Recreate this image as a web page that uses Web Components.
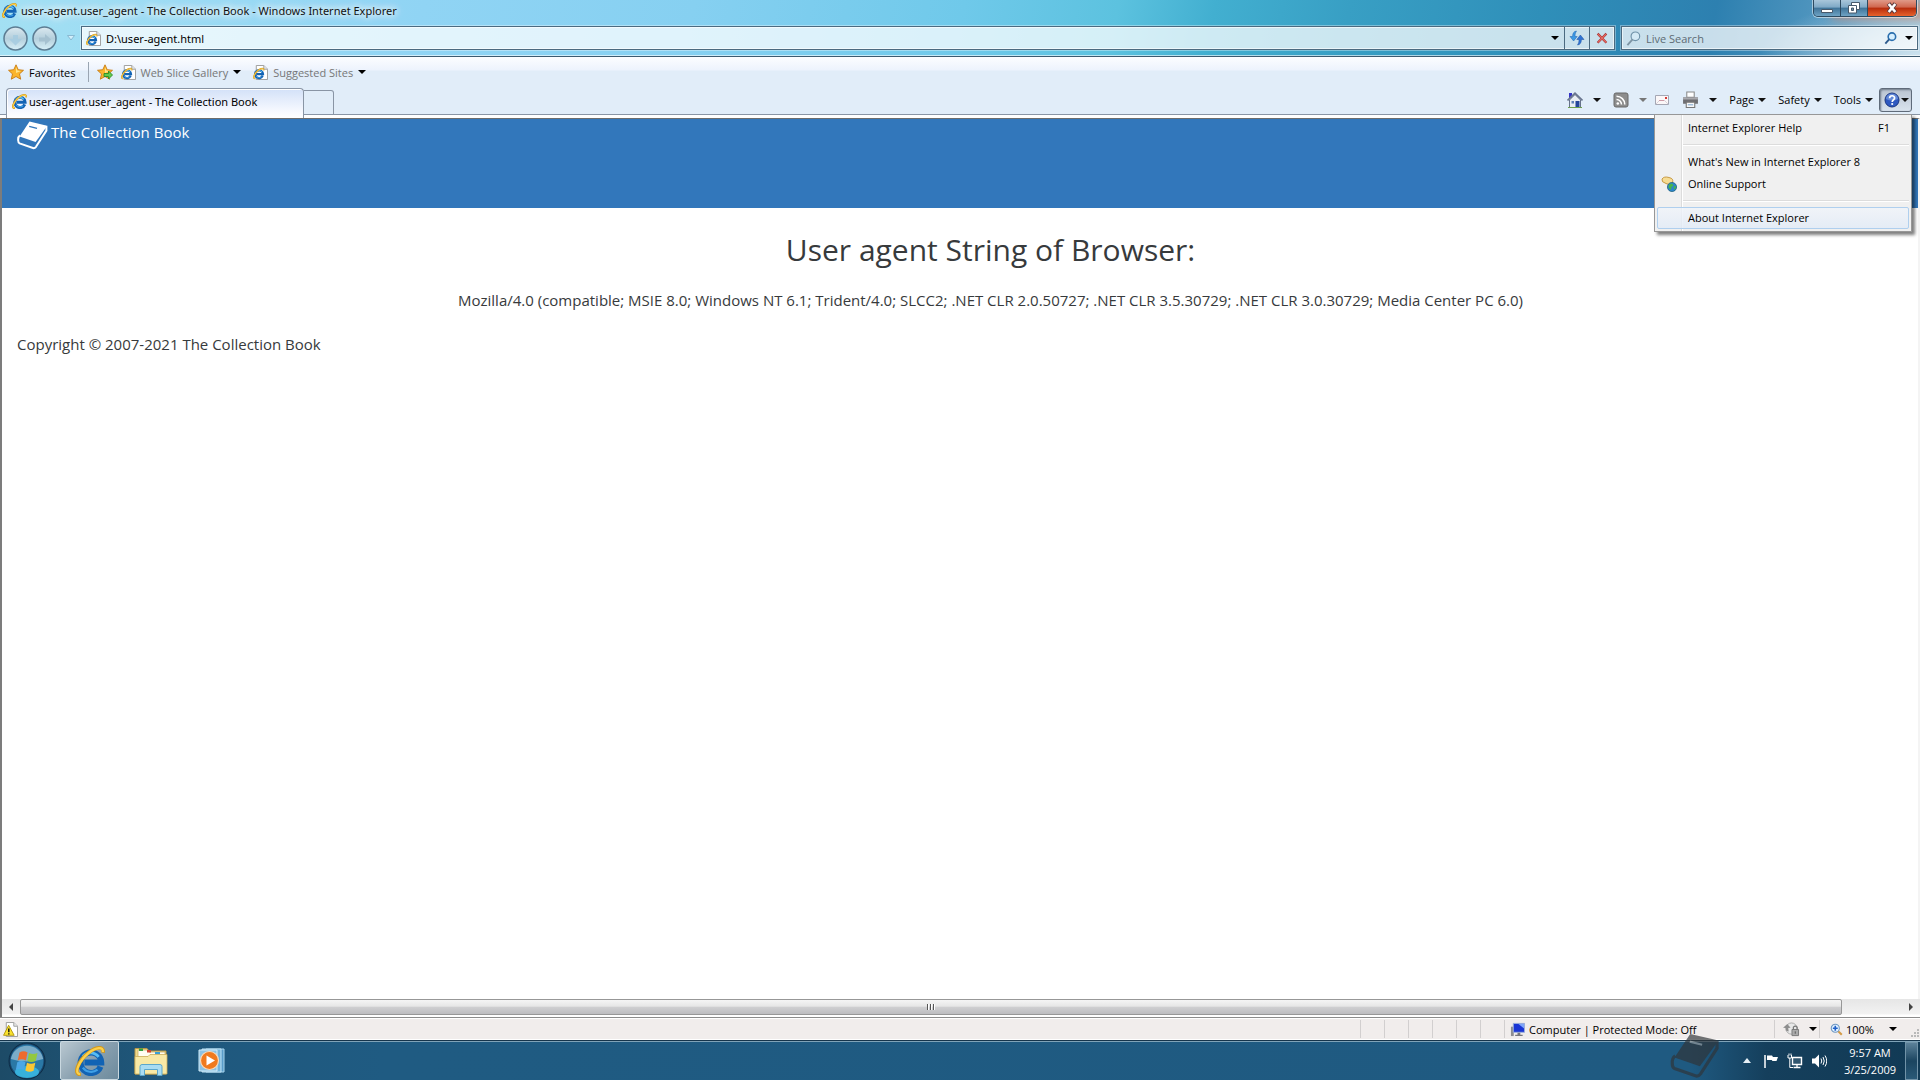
<!DOCTYPE html>
<html lang="en">
<head>
<meta charset="utf-8">
<title>user-agent.user_agent - The Collection Book</title>
<style>
	body {
		margin: 0;
		font-family: "Open Sans", "Noto Sans", sans-serif;
		font-size: 11px;
		color: #000;
		--caption: #111;
		--caption-font: "Noto Sans", "Open Sans", sans-serif;
		--page-blue: #3277bb;
		--line: #8995a5;
	}
</style>
</head>
<body>
<desktop-shell></desktop-shell>

<script>
const ieRing = `
	<path d="M13.6 11A5.500 5.500 0 1 1 14 8.800H5" fill="none" stroke="#1263b4" stroke-width="3.200"/>
	<path d="M12.600 5.800A5.400 5.400 0 0 0 4.200 5.600" fill="none" stroke="#58bdf4" stroke-width="1.500"/>
	<path d="M4.200 11.500A5.400 5.400 0 0 0 12 12.600" fill="none" stroke="#3fa0e6" stroke-width="1.200"/>
	<path d="M3.200 15.200C-1.400 15.400 1.800 7.800 7.200 3.600 11.200.4 15.600-.2 15 3.600" fill="none" stroke="#d39a1c" stroke-width="2"/>
	<path d="M2.800 15C-1 15 2.200 7.800 7.400 3.600 11.200.7 15.200.2 14.900 3.200" fill="none" stroke="#fbd04c" stroke-width="1.200"/>`;
const sheet = `<path d="M3.5.5h8l4 4v11h-12z" fill="#fff" stroke="#9a9a9a"/><path d="M11.5.5v4h4" fill="#e8e8e8" stroke="#9a9a9a"/>`;
const star = `<path d="M8 .8l2.2 4.9 5.3.6-4 3.6 1.2 5.3L8 12.500l-4.700 2.700 1.200-5.300-4-3.600 5.300-.6z" fill="#fbb52c" stroke="#c77a12" stroke-width=".9"/><path d="M8 3l1.400 3.600 3.600.5-5 2z" fill="#ffe48a"/>`;
const bookShape = `
	<path d="M12.500.6L29 4.400Q30 4.800 29.400 6L18.600 21 2.600 15.400z"/>
	<path d="M3 14.400Q.8 16 1.200 19.600 1.200 21.800 2.600 22.400L16.600 27.200Q18 27.200 19 25.800L29.400 9.600V4.800" fill="none" stroke="currentColor" stroke-width="2"/>
	<path d="M12.200 5.400L20 7.400" stroke="var(--slot, #3277bb)" stroke-width="1.400"/>`;

// every drawing is [viewBox, markup]
const icons = {
	ie: ['0 0 16 16', ieRing],
	iepage: ['0 0 16 16', `${sheet}<g transform="translate(0 3) scale(.76)">${ieRing}</g>`],
	star: ['0 0 16 16', star],
	staradd: ['0 0 16 16', `${star}<path d="M7 9.500h4.500V7l4 4-4 4v-2.500H7z" fill="#5fcb4e" stroke="#2b8a24" stroke-width=".9"/>`],
	arrow: ['0 0 8 4', `<path d="M0 0h8L4 4z" fill="currentColor"/>`],
	back: ['0 0 25 25', `<circle cx="12.500" cy="12.500" r="11.500" fill="url(#g)" stroke="#5c7c92" stroke-width="1.500"/><path d="M6 13l6.500 6.500L19 13h-4V9h-5v4z" fill="#a4cbe0" opacity=".8"/>`],
	forward: ['0 0 25 25', `<circle cx="12.500" cy="12.500" r="11.500" fill="url(#g)" stroke="#5c7c92" stroke-width="1.500"/><path d="M7 11.500h6V8l6 5.500-6 5.500v-3.500H7z" fill="#a3bfce" opacity=".9"/>`],
	history: ['0 0 8 6', `<path d="M.5.500h7L4 5z" fill="#d2effb" stroke="#7dafc8" stroke-width=".8"/>`],
	refresh: ['0 0 16 16', `<path d="M7.500 1C4.600 1.400 3.600 3.500 3.600 6.500H1L4.600 11 8.200 6.500H6C6 4 6.500 2.500 7.500 1z" fill="#3d9ae4" stroke="#1a5fae" stroke-width=".5"/><path d="M8.500 15c2.900-.4 3.900-2.500 3.900-5.500H15L11.400 5 7.800 9.500H10c0 2.500-.5 4-1.500 5.500z" fill="#2f74d4" stroke="#1b4f9e" stroke-width=".5"/>`],
	stop: ['0 0 16 16', `<path d="M3 3l10 10.500M13 3L3 13.500" stroke="#a53a3a" stroke-width="2.600"/><path d="M3.500 3.500L13 13.200M12.500 3.500L3.500 13" stroke="#ea6a62" stroke-width="1.300"/>`],
	lens: ['0 0 16 16', `<circle cx="10" cy="5.600" r="4.600" fill="#d9eefa" fill-opacity=".7" stroke="#6f92a8" stroke-width="1.200"/><path d="M7 9L1.500 15" stroke="#7e95a4" stroke-width="2"/>`],
	go: ['0 0 16 16', `<circle cx="9.500" cy="6" r="4" fill="#d6efff" stroke="#2b6fae" stroke-width="1.700"/><path d="M6.500 9L2.500 13.500" stroke="#2c5a8c" stroke-width="2"/>`],
	home: ['0 0 16 16', `<path d="M2 1h3v5H2z" fill="#3434c8"/><path d="M2.500 8L8 2.500 13.500 8v7.500h-11z" fill="#e9edf3" stroke="#66728a"/><path d="M.5 8.500L8 1.300l7.500 7.200" fill="none" stroke="#6a7690" stroke-width="1.700"/><path d="M8.500 9h4v6.500h-4z" fill="#24459a"/><path d="M4.500 9h2.500v2.500H4.500z" fill="#5d7fb8"/><path d="M1 15.500h14" stroke="#6ca04c"/>`],
	rss: ['0 0 16 16', `<rect x="1" y="1" width="14" height="14" rx="2" fill="#8d8d8d" stroke="#686868"/><circle cx="4.800" cy="11.500" r="1.300" fill="#fff"/><path d="M3.500 7.500a5 5 0 0 1 5 5M3.500 4.200a8.300 8.300 0 0 1 8.300 8.300" fill="none" stroke="#fff" stroke-width="1.500"/>`],
	mail: ['0 0 16 16', `<path d="M1.500 3.500h13v9h-13z" fill="#fbf7f8" stroke="#a5a7b4"/><path d="M2 12l4-4M14 12l-4-4" stroke="#d9d2da"/><path d="M11 5h2v2h-2z" fill="#d43a36"/><path d="M5 8.500h5" stroke="#cc9aa6"/>`],
	print: ['0 0 16 16', `<path d="M4.500 1h7v5h-7z" fill="#fff" stroke="#8a8a8a"/><path d="M1 6h14v6H1z" fill="#6e6e72"/><path d="M1 6h14v2H1z" fill="#a9a9ad"/><path d="M4 10.500h8v5H4z" fill="#f7f7f7" stroke="#777"/><path d="M5.500 13h5" stroke="#7fa8d0"/>`],
	help: ['0 0 16 16', `<circle cx="8" cy="8" r="7" fill="#2e58c0" stroke="#1b3680"/><path d="M2 7a6 5.500 0 0 1 12 0q-6 3-12 0z" fill="#86a8e8" opacity=".6"/><path d="M5.600 6.200C5.600 3 10.600 3 10.600 6c0 1.800-2.400 1.800-2.400 4" fill="none" stroke="#fff" stroke-width="1.700"/><circle cx="8.200" cy="12" r="1.100" fill="#fff"/>`],
	support: ['0 0 16 16', `<path d="M1 3Q3 0 8 1.500q5 1 3.500 5L9.500 9 5 7.500Q0 6 1 3z" fill="#f6dc93" stroke="#c29239" stroke-width=".9"/><circle cx="11" cy="11" r="4.600" fill="#2c86c9" stroke="#195a78" stroke-width=".7"/><path d="M8 8.500l3-1 1.500 2-2 1.500-.5 3-2.500-2.500zM13.500 10l1.700.5-1.200 3-1.500-1.500z" fill="#46b54a"/>`],
	min: ['0 0 14 12', `<path d="M1.500 7.500h11v3h-11z" fill="#fff" stroke="#47596b"/>`],
	restore: ['0 0 14 12', `<path d="M4.500.5h8v7h-8z" fill="#fff" stroke="#47596b"/><path d="M1.500 3.500h8v7.500h-8z" fill="#fff" stroke="#47596b"/><path d="M4.500 6h2v2.500h-2z" fill="#7391a8" stroke="#47596b"/>`],
	close: ['0 0 14 12', `<path d="M3.500 1.500l7 9M10.500 1.500l-7 9" stroke="#5b3a3c" stroke-width="4.400"/><path d="M3.700 2l6.600 8M10.300 2l-6.600 8" stroke="#fff" stroke-width="2.600"/>`],
	warn: ['0 0 16 16', `${sheet}<path d="M6 3.500L.6 14.200h11.300z" fill="#fbe22c" stroke="#b39710" stroke-linejoin="round"/><path d="M6.200 7v4M6.200 12v1.400" stroke="#111" stroke-width="1.500"/>`],
	computer: ['0 0 16 16', `<path d="M1 5h3v10H1z" fill="#8d8d92"/><path d="M3.500 1.500h12v9.500h-12z" fill="#1a35d4" stroke="#9db1dc"/><path d="M9 2h6v5z" fill="#7ea4fa"/><path d="M8 11.500h3v2h2.500V15h-8v-1.500H8z" fill="#77777c"/>`],
	lock: ['0 0 18 16', `<circle cx="9" cy="7" r="6" fill="#e8e8e8" stroke="#a9a9a9"/><path d="M0 6l4.500-4L8 6 5.500 6.500 6 10 3 9 2.800 6.500z" fill="#8e8e8e"/><path d="M9.500 8h7v6.500h-7z" fill="#aaa" stroke="#777"/><path d="M11 8V5.500q2-2 4 0V8" fill="none" stroke="#777" stroke-width="1.300"/><path d="M13 10v2.500" stroke="#555"/>`],
	zoom: ['0 0 16 16', `<path d="M10 10l4.500 4.500" stroke="#d39a45" stroke-width="2.600"/><circle cx="6.500" cy="6.500" r="5" fill="#e4f3ff" stroke="#6e96c0" stroke-width="1.300"/><path d="M6.500 3.500v6M3.500 6.500h6" stroke="#1f5fc8" stroke-width="2"/>`],
	grip: ['0 0 10 10', `<path d="M7 1h2v2H7zM7 4h2v2H7zM7 7h2v2H7zM4 4h2v2H4zM4 7h2v2H4zM1 7h2v2H1z" fill="#b9b9b9"/>`],
	left: ['0 0 6 8', `<path d="M5 0v8L1 4z" fill="#444"/>`],
	right: ['0 0 6 8', `<path d="M1 0v8l4-4z" fill="#444"/>`],
	orb: ['0 0 38 38', `
		<circle cx="19" cy="19" r="18" fill="#17456b" stroke="#0d2c45"/>
		<circle cx="19" cy="19" r="16.500" fill="#2a78a6"/>
		<ellipse cx="19" cy="30" rx="12" ry="6" fill="#3cc4ee" opacity=".75"/>
		<path d="M2.800 17a16.500 16.500 0 0 1 32.400 0q-16 5-32.400 0z" fill="#a8c8da" opacity=".65"/>
		<path d="M11.500 10.500q4-2.500 8 0l-1.600 8q-4-2.300-8.200 0z" fill="#ee6a2e"/>
		<path d="M21 11q4 2.200 8.500 0l-1.800 8q-4.200 2.200-8.300 0z" fill="#93c83e"/>
		<path d="M9.300 20.200q4-2.200 8.200 0l-1.700 8q-4-2.500-8-.2z" fill="#4aa7e6"/>
		<path d="M19 20.700q4 2.200 8.300 0l-1.700 8q-4.300 2.300-8.200-.2z" fill="#fbc734"/>`],
	explorer: ['0 0 34 30', `
		<path d="M1 6V2.500h12L15 5h17v23H1z" fill="#efd88a" stroke="#b89748"/>
		<path d="M4 4h10l1 2h16v5H4z" fill="#fffdf2" stroke="#c8b06a" stroke-width=".8"/>
		<path d="M5 2.500h4V5H5z" fill="#35a03c"/><path d="M13 4h4v2.500h-4z" fill="#cf4433"/><path d="M21 6h5v2.500h-5z" fill="#38a0d6"/>
		<path d="M1 10.500h13l2-2h17V28H1z" fill="#f8e9a6" stroke="#cbae5c" stroke-width=".8"/>
		<path d="M6 29.500V20.500q0-2 2-2h18q2 0 2 2v9h-4.500v-6h-13v6z" fill="#a9dcf2" stroke="#5ba7cc"/>`],
	media: ['0 0 28 26', `
		<path d="M8 1h18v23H8z" fill="#5a9cc8" stroke="#a7d5ee"/>
		<path d="M4 1h19v23H4z" fill="#74b4dc" stroke="#bfe2f4"/>
		<path d="M1 2h18v21H1z" fill="#8cc2e4" stroke="#d3ecf8"/>
		<circle cx="11.500" cy="12.500" r="9" fill="#f07a1e" stroke="#fbd9b5" stroke-width="1.200"/>
		<path d="M8.500 7.500v10l8.500-5z" fill="#fff"/>`],
	hidden: ['0 0 8 5', `<path d="M0 5l4-5 4 5z" fill="#e6f0f6"/>`],
	flag: ['0 0 16 16', `<path d="M2 2v13" stroke="#fff" stroke-width="1.500"/><path d="M4 2.500h5l1 1.500h5l-1.500 4H9.500l-.8-1H4z" fill="#fff"/>`],
	network: ['0 0 16 16', `<path d="M5.500 4.500h9v7h-9z" fill="#31566f" stroke="#fff" stroke-width="1.400"/><path d="M10 12v2M6.500 14.500h7" stroke="#fff" stroke-width="1.300"/><path d="M1 2v3h3.500V2M2.800 5v9.500H6M2 .5v2M4 .5v2" fill="none" stroke="#fff"/>`],
	sound: ['0 0 16 16', `<path d="M1 5.500h3L8 1.500v13l-4-4H1z" fill="#fff"/><path d="M10 5.500q1.500 2.500 0 5M12 4q2.500 4 0 8M14 2.500q3.500 5.500 0 11" fill="none" stroke="#fff"/>`],
	book: ['0 0 31 29', bookShape]
};

class WinIcon extends HTMLElement {
	constructor() {
		super();
		this.attachShadow({ mode: 'open' });
	}

	connectedCallback() {
		const [box, art] = icons[this.getAttribute('name')];
		const w = this.getAttribute('w') || 16;
		const h = this.getAttribute('h') || w;
		this.shadowRoot.innerHTML = `
			<style>
				:host { display: inline-flex; flex: none; }
				svg { display: block; }
			</style>
			<svg width="${w}" height="${h}" viewBox="${box}" fill="currentColor" aria-hidden="true">
				<defs><linearGradient id="g" x2="0" y2="1"><stop stop-color="#dbe9f0"/><stop offset=".5" stop-color="#b4cfdc"/><stop offset="1" stop-color="#d8f0f8"/></linearGradient></defs>
				${art}
			</svg>`;
	}
}
customElements.define('win-icon', WinIcon);

// small helper: an element whose shadow root is one fixed template
function define(name, html) {
	const template = document.createElement('template');
	template.innerHTML = html;
	customElements.define(name, class extends HTMLElement {
		constructor() {
			super();
			this.attachShadow({ mode: 'open' });
			this.shadowRoot.appendChild(template.content.cloneNode(true));
		}
	});
}

const reset = `
	:host, * { box-sizing: border-box; }
	button, input { font: inherit; color: inherit; margin: 0; padding: 0; border: 0; background: none; }
	button { display: flex; align-items: center; white-space: nowrap; }
`;

define('title-bar', `
	<style>
		${reset}
		:host { display: flex; align-items: flex-start; height: 25px; padding: 0 3px 0 2px; }
		.name { display: flex; align-items: center; gap: 4px; height: 21px; flex: 1; color: var(--caption); font-family: var(--caption-font); }
		.name span { text-shadow: 0 0 6px #fff, 0 0 8px #fff, 0 0 12px #fff; }
		.buttons { display: flex; border: 1px solid #2d4a60; border-top: 0; border-radius: 0 0 5px 5px; box-shadow: 0 0 0 1px rgba(255,255,255,.5), 18px 2px 10px rgba(240,120,70,.5); overflow: hidden; }
		.buttons button { justify-content: center; width: 27px; height: 16px; background: linear-gradient(#a9c6da, #7fa9c6 45%, #3f7398 50%, #6ea3c4); border-right: 1px solid #2d4a60; }
		.buttons button.close { width: 48px; border: 0; background: linear-gradient(#e09a88, #d0664d 45%, #b62c0c 50%, #e8622c); }
	</style>
	<div class="name"><win-icon name="ie" w="15"></win-icon><span>user-agent.user_agent - The Collection Book - Windows Internet Explorer</span></div>
	<div class="buttons">
		<button aria-label="Minimize"><win-icon name="min" w="14" h="12"></win-icon></button>
		<button aria-label="Restore"><win-icon name="restore" w="14" h="12"></win-icon></button>
		<button class="close" aria-label="Close"><win-icon name="close" w="14" h="12"></win-icon></button>
	</div>
`);

define('nav-bar', `
	<style>
		${reset}
		:host { display: flex; align-items: flex-start; height: 32px; padding: 1px 2px 0 3px; border-bottom: 1px solid #3c5a70; box-shadow: inset 0 -1px rgba(255,255,255,.6); }
		.travel { display: flex; align-items: center; gap: 4px; height: 24px; width: 78px; }
		.travel .recent { margin-left: 6px; }
		.box { display: flex; height: 24px; border: 1px solid #4b6a80; box-shadow: 0 0 0 1px rgba(255,255,255,.35), inset 0 0 0 1px rgba(255,255,255,.6); background: rgba(255,255,255,.74); }
		.address { flex: 1; font-family: var(--caption-font); }
		.address label { display: flex; align-items: center; gap: 5px; flex: 1; padding-left: 4px; }
		.address input { flex: 1; }
		.box button { justify-content: center; width: 25px; }
		.address button + button { border-left: 1px solid #4b6a80; }
		.address button.drop { width: 18px; }
		.search { width: 297px; margin-left: 6px; }
		.search label { display: flex; align-items: center; gap: 5px; flex: 1; padding-left: 4px; }
		.search input { flex: 1; min-width: 0; }
		.search input::placeholder { color: #5d6b74; opacity: 1; }
		.search button.drop { width: 14px; padding-right: 2px; }
	</style>
	<div class="travel">
		<button aria-label="Back"><win-icon name="back" w="25"></win-icon></button>
		<button aria-label="Forward"><win-icon name="forward" w="25"></win-icon></button>
		<button class="recent" aria-label="Recent pages"><win-icon name="history" w="8" h="6"></win-icon></button>
	</div>
	<div class="box address">
		<label><win-icon name="iepage" w="15"></win-icon><input type="text" aria-label="Address" value="D:\\user-agent.html"></label>
		<button class="drop" aria-label="Show address list"><win-icon name="arrow" w="8" h="4"></win-icon></button>
		<button aria-label="Refresh"><win-icon name="refresh" w="16"></win-icon></button>
		<button aria-label="Stop"><win-icon name="stop" w="14"></win-icon></button>
	</div>
	<div class="box search">
		<label><win-icon name="lens" w="15"></win-icon><input type="text" aria-label="Live Search" placeholder="Live Search"></label>
		<button aria-label="Search"><win-icon name="go" w="15"></win-icon></button>
		<button class="drop" aria-label="Search options"><win-icon name="arrow" w="8" h="4"></win-icon></button>
	</div>
`);

define('favorites-bar', `
	<style>
		${reset}
		:host { display: flex; align-items: center; height: 30px; padding-left: 8px; background: linear-gradient(#fcfdff, #edf3fd 13px, #e1edf9 14px); }
		button { gap: 5px; }
		.sep { width: 1px; height: 20px; margin: 0 8px 0 12px; background: #9aa5b2; }
		.link { color: #777; margin-left: 8px; }
		.link + .link { margin-left: 12px; }
		.link win-icon:last-child { color: #000; }
	</style>
	<button><win-icon name="star" w="16"></win-icon>Favorites</button>
	<span class="sep"></span>
	<button aria-label="Add to Favorites Bar"><win-icon name="staradd" w="16"></win-icon></button>
	<button class="link"><win-icon name="iepage" w="15"></win-icon>Web Slice Gallery<win-icon name="arrow" w="8" h="4"></win-icon></button>
	<button class="link"><win-icon name="iepage" w="15"></win-icon>Suggested Sites<win-icon name="arrow" w="8" h="4"></win-icon></button>
`);

// toolbar button with a drop-down arrow; the caption or icon comes in by the slot
define('command-button', `
	<style>
		${reset}
		:host { display: block; }
		button { gap: var(--arrow-gap, 4px); height: 24px; }
		win-icon { color: var(--arrow, #111); }
	</style>
	<button><slot></slot><win-icon name="arrow" w="8" h="4"></win-icon></button>
`);

define('help-menu', `
	<style>
		${reset}
		:host {
			display: block; width: 258px; padding: 2px; border: 1px solid #979797;
			background: linear-gradient(90deg, transparent 26px, #dcdcdc 26px, #dcdcdc 27px, #fff 27px, #fff 28px, transparent 28px), #f0f0f0;
			box-shadow: 3px 3px 3px rgba(0,0,0,.5);
		}
		button { width: 100%; height: 22px; border: 1px solid transparent; border-radius: 2px; padding-right: 18px; }
		.icon { width: 30px; padding-left: 3px; display: flex; }
		.key { margin-left: auto; }
		hr { height: 2px; margin: 5px 0 5px 26px; border: 0; background: linear-gradient(#dcdcdc 50%, #fff 50%); }
		.hot { border-color: #afcfee; background: linear-gradient(rgba(240,244,250,.8), rgba(226,235,247,.8)); }
	</style>
	<button><span class="icon"></span>Internet Explorer Help<span class="key">F1</span></button>
	<hr>
	<button><span class="icon"></span>What's New in Internet Explorer 8</button>
	<button><span class="icon"><win-icon name="support" w="16"></win-icon></span>Online Support</button>
	<hr>
	<button class="hot"><span class="icon"></span>About Internet Explorer</button>
`);

define('tab-row', `
	<style>
		${reset}
		:host { display: flex; height: 31px; padding: 0 8px 0 6px; background: linear-gradient(#e1edf9 27px, var(--line) 27px, var(--line) 28px, #fff 28px); }
		.tab { width: 298px; height: 30px; margin-top: 1px; padding: 0 0 4px 5px; gap: 2px; border: 1px solid var(--line); border-bottom: 0; border-radius: 4px 4px 0 0; background: linear-gradient(#d3e1f8, #f8faff 80%, #fff); box-shadow: inset 1px 1px #fff; font-family: var(--caption-font); }
		.new { width: 30px; height: 25px; margin-top: 3px; border: 1px solid var(--line); border-left: 0; border-radius: 0 3px 0 0; }
		.commands { display: flex; gap: 12px; margin-left: auto; height: 25px; align-items: center; }
		.wide { --arrow-gap: 10px; }
		.off { --arrow: #777; }
		.mail { margin-left: -5px; }
		.help { position: relative; width: 33px; height: 24px; margin-left: -6px; border: 1px solid #5f6b7a; border-radius: 3px; background: linear-gradient(#b9c3d0, #d9e3ee); box-shadow: inset 1px 1px 2px #6f7b8a; --arrow-gap: 1px; }
		.help command-button { padding-left: 4px; margin-top: -1px; }
		help-menu { position: absolute; top: 25px; right: -1px; z-index: 2; }
	</style>
	<button class="tab"><win-icon name="ie" w="15"></win-icon>user-agent.user_agent - The Collection Book</button>
	<button class="new" aria-label="New Tab"></button>
	<div class="commands">
		<command-button class="wide"><win-icon name="home" w="16"></win-icon></command-button>
		<command-button class="wide off"><win-icon name="rss" w="16"></win-icon></command-button>
		<button class="mail" aria-label="Read mail"><win-icon name="mail" w="16"></win-icon></button>
		<command-button class="wide"><win-icon name="print" w="17"></win-icon></command-button>
		<command-button>Page</command-button>
		<command-button>Safety</command-button>
		<command-button>Tools</command-button>
		<div class="help">
			<command-button><win-icon name="help" w="16"></win-icon></command-button>
			<help-menu></help-menu>
		</div>
	</div>
`);

define('web-page', `
	<style>
		:host, * { box-sizing: border-box; }
		:host { display: block; overflow: hidden; border: 2px solid #7c7c7c; border-top: 1px solid #6d6d6d; border-right-color: #f4f4f4; border-bottom: 0; background: #fff; font-size: 15px; color: #373a3c; }
		/* the document is a little wider than the viewport */
		.doc { margin-right: -61px; }
		header { height: 89px; padding: 1px 15px; background: var(--page-blue); }
		header a { display: inline-flex; align-items: flex-start; gap: 3px; color: #fff; text-decoration: none; line-height: 24px; }
		main { text-align: center; }
		h1 { margin: 0; padding-top: 20px; font-size: 30px; line-height: 44px; font-weight: 400; }
		p { margin: 0; line-height: 24px; }
		main p { padding-top: 16px; }
		footer { padding: 20px 15px; }
		win-icon { padding-top: 1px; }
	</style>
	<div class="doc">
		<header><a href="#"><win-icon name="book" w="31" h="29"></win-icon>The Collection Book</a></header>
		<main>
			<h1>User agent String of Browser:</h1>
			<p>Mozilla/4.0 (compatible; MSIE 8.0; Windows NT 6.1; Trident/4.0; SLCC2; .NET CLR 2.0.50727; .NET CLR 3.5.30729; .NET CLR 3.0.30729; Media Center PC 6.0)</p>
		</main>
		<footer><p>Copyright © 2007-2021 The Collection Book</p></footer>
	</div>
`);

define('scroll-bar', `
	<style>
		${reset}
		:host { display: flex; height: 18px; padding-bottom: 2px; border-left: 2px solid #7c7c7c; background: linear-gradient(#e6e6e6, #f2f2f2 15px, #fff 16px); }
		button { justify-content: center; width: 18px; }
		.track { flex: 1; display: flex; }
		.thumb { display: flex; align-items: center; justify-content: center; gap: 1px; width: calc(100% - 60px); border: 1px solid #979797; border-radius: 2px; background: linear-gradient(#f5f5f5, #e6e6e6 45%, #cfcfd1 50%, #bdbdc0); }
		.thumb i { width: 2px; height: 6px; background: #555; border-right: 1px solid #fff; }
	</style>
	<button aria-label="Scroll left"><win-icon name="left" w="6" h="8"></win-icon></button>
	<div class="track"><div class="thumb"><i></i><i></i><i></i></div></div>
	<button aria-label="Scroll right"><win-icon name="right" w="6" h="8"></win-icon></button>
`);

define('status-bar', `
	<style>
		${reset}
		:host { display: flex; height: 23px; border-top: 1px solid #8c8c8c; box-shadow: inset 0 1px #fff, inset 0 -1px #fff; background: #f1edec; }
		.message { flex: 1; display: flex; align-items: center; gap: 4px; padding-left: 3px; }
		.pane { display: flex; align-items: center; width: 24px; margin: 2px 0; border-left: 1px solid #d2cfcf; }
		.zone { width: 270px; gap: 4px; padding-left: 5px; }
		.lock { width: 45px; }
		.lock button { gap: 9px; padding-left: 8px; }
		.zoom { width: 101px; padding-left: 10px; }
		.zoom button { gap: 3px; }
		.zoom button win-icon:last-child { margin-left: 12px; }
		.grip { margin: 8px 0 0 auto; }
	</style>
	<div class="message"><win-icon name="warn" w="15"></win-icon>Error on page.</div>
	<div class="pane"></div><div class="pane"></div><div class="pane"></div>
	<div class="pane"></div><div class="pane"></div><div class="pane"></div>
	<div class="pane zone"><win-icon name="computer" w="15"></win-icon>Computer | Protected Mode: Off</div>
	<div class="pane lock"><button aria-label="InPrivate Filtering"><win-icon name="lock" w="17" h="15"></win-icon><win-icon name="arrow" w="8" h="4"></win-icon></button></div>
	<div class="pane zoom"><button><win-icon name="zoom" w="13"></win-icon>100%<win-icon name="arrow" w="8" h="4"></win-icon></button><win-icon class="grip" name="grip" w="10"></win-icon></div>
`);

define('task-bar', `
	<style>
		${reset}
		:host {
			position: relative; display: flex; height: 40px; border-top: 1px solid #16354c;
			box-shadow: inset 0 1px #7fa3b8;
			background: linear-gradient(90deg, #1d4b67, #1f587d 9%, #1f5b82 20%, #1f5a81 88%, #153f5c 92%, #113a55);
			color: #fff;
		}
		.start { width: 60px; padding-left: 8px; }
		.task { justify-content: center; width: 60px; margin-right: 1px; }
		.active { width: 59px; margin: 0 2px 0 0; border: 1px solid #c9d8e0; border-radius: 2px; background: linear-gradient(135deg, #b9c8d1, #8aa1b0 50%, #6c8a9d); }
		.tray { display: flex; align-items: center; margin-left: auto; }
		.tray button { margin-right: 8px; }
		.tray .up { margin-right: 12px; }
		.tray .clock { display: block; width: 70px; margin: 0; line-height: 17px; text-align: center; }
		.tray .show { width: 13px; height: 38px; margin-right: 2px; border: 1px solid #7193a8; background: linear-gradient(#5c8199, #1b4560 50%, #2a5a78); }
		.mark { position: absolute; right: 200px; bottom: 1px; opacity: .68; color: #303438; --slot: #999; }
	</style>
	<button class="start" aria-label="Start"><win-icon name="orb" w="38"></win-icon></button>
	<button class="task active" aria-label="Internet Explorer"><win-icon name="ie" w="30"></win-icon></button>
	<button class="task" aria-label="Windows Explorer"><win-icon name="explorer" w="34" h="30"></win-icon></button>
	<button class="task" aria-label="Windows Media Player"><win-icon name="media" w="28" h="26"></win-icon></button>
	<div class="tray">
		<button class="up" aria-label="Show hidden icons"><win-icon name="hidden" w="8" h="5"></win-icon></button>
		<button aria-label="Action Center"><win-icon name="flag" w="16"></win-icon></button>
		<button aria-label="Network"><win-icon name="network" w="16"></win-icon></button>
		<button aria-label="Volume"><win-icon name="sound" w="16"></win-icon></button>
		<button class="clock">9:57 AM<br>3/25/2009</button>
		<button class="show" aria-label="Show desktop"></button>
	</div>
	<win-icon class="mark" name="book" w="50" h="46"></win-icon>
`);

define('desktop-shell', `
	<style>
		:host { display: flex; flex-direction: column; height: 100vh; overflow: hidden; }
		.glass {
			background:
				radial-gradient(ellipse 160px 60px at 100% 100%, rgba(225,238,246,.8), transparent),
				linear-gradient(100deg, #a3e0f3, #90d4f4 22%, #86d0f1 36%, #6fc9ea 50%, #5cc2df 58%, #42afd0 63%, #389fc4 70%, #2f8fb9 80%, #2d80b0 89%, #5b9cc3 96%, #86b8d2);
		}
		web-page { flex: 1; }
	</style>
	<div class="glass">
		<title-bar></title-bar>
		<nav-bar></nav-bar>
	</div>
	<favorites-bar></favorites-bar>
	<tab-row></tab-row>
	<web-page></web-page>
	<scroll-bar></scroll-bar>
	<status-bar></status-bar>
	<task-bar></task-bar>
`);
</script>
</body>
</html>
